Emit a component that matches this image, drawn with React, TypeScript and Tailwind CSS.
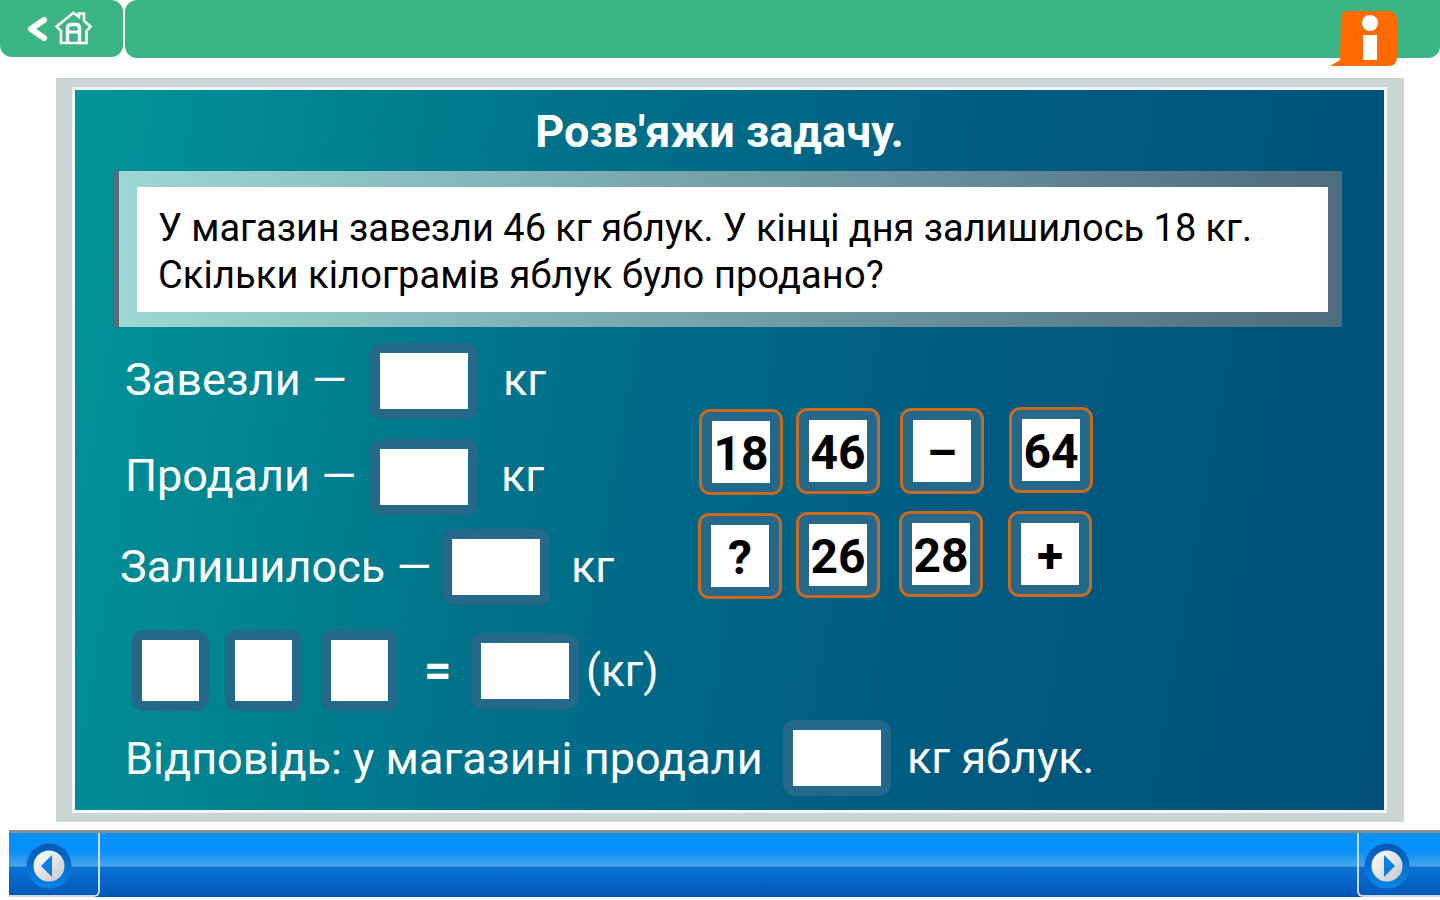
const FONT = "font-['Roboto','Noto_Sans',sans-serif]";

function HomeIcon() {
  return (
    <svg className="mb-0.5" width="37" height="34" viewBox="0 0 37 34" fill="none" stroke="#fff" strokeWidth="2.6">
      <path d="M1.5 15.5 L18.5 1.8 L24 6 L24 2.5 L29 2.5 L29 10 L35.5 15.5 L31.5 20 L31.5 32 L6 32 L6 20 Z" />
      <path d="M12.5 31 L12.5 17 Q12.5 13.5 16 13.5 L21 13.5 Q24.5 13.5 24.5 17 L24.5 31" strokeWidth="3.4" />
      <path d="M13 21 L24 21" strokeWidth="3" />
    </svg>
  );
}

function RoundArrow({ dir }: { dir: "left" | "right" }) {
  return (
    <svg className="mt-1" width="46" height="46" viewBox="0 0 46 46">
      <defs>
        <linearGradient id={`ring-${dir}`} x1="0" y1="0" x2="0" y2="1">
          <stop offset="0" stopColor="#0057b5" />
          <stop offset="1" stopColor="#0a86e8" />
        </linearGradient>
        <linearGradient id={`disc-${dir}`} x1="0" y1="0" x2="1" y2="1">
          <stop offset="0" stopColor="#ffffff" />
          <stop offset="1" stopColor="#c4c8cc" />
        </linearGradient>
      </defs>
      <circle cx="23" cy="23" r="22.5" fill={`url(#ring-${dir})`} />
      <circle cx="23" cy="23" r="15.5" fill={`url(#disc-${dir})`} />
      {dir === "left" ? (
        <path d="M15 23 L26 12 L26 34 Z" fill="#0d7fe0" />
      ) : (
        <path d="M31 23 L20 12 L20 34 Z" fill="#0d7fe0" />
      )}
    </svg>
  );
}

function Slot({ wide = false, tall = false, className = "" }: { wide?: boolean; tall?: boolean; className?: string }) {
  return (
    <div className={`rounded-xl bg-[#24688a] p-2.5 ${className}`}>
      <div className={`${wide ? "w-[88px]" : "w-[57px]"} ${tall ? "h-[61px]" : "h-[56px]"} bg-white`} />
    </div>
  );
}

function Tile({ label, className = "" }: { label: string; className?: string }) {
  return (
    <div className={`flex h-[86px] w-[84px] items-center justify-center rounded-[11px] border-[3px] border-[#c96a1e] bg-[#24688a] ${className}`}>
      <div className="flex h-[62px] w-[58px] items-center justify-center bg-white pt-[3px] text-[48px] leading-none font-bold text-black">
        {label}
      </div>
    </div>
  );
}

export default function App() {
  return (
    <div className={`${FONT} h-[900px] w-[1440px] overflow-hidden bg-white`}>
      <header className="relative flex h-[58px] gap-0.5">
        <div className="flex h-[57px] w-[123px] items-center gap-[7px] rounded-b-xl rounded-tr-xl bg-[#3bb583] pl-[26px]">
          <svg width="22" height="26" viewBox="0 0 22 26">
            <path d="M18 4 L5 13 L18 22" fill="none" stroke="#fff" strokeWidth="6" strokeLinejoin="round" strokeLinecap="round" />
          </svg>
          <HomeIcon />
        </div>
        <div className="h-[58px] flex-1 rounded-b-xl rounded-tl-xl bg-[#3bb583]" />
        <svg className="absolute top-[10px] left-[1329px]" width="69" height="57" viewBox="0 0 69 57">
          <path d="M12 8 Q12 1 19 1 L58 1 Q68 1 68 10 L68 47 Q68 56 59 56 L1 56 L11 50 Z" fill="#ff6a00" />
          <circle cx="41" cy="13" r="8" fill="#fff" />
          <rect x="34" y="25" width="14" height="25" fill="#fff" />
        </svg>
      </header>

      <main className="mt-[20px] ml-[56px] h-[744px] w-[1348px] bg-[#ccd5d6] pt-[9px] pl-[16px]">
        <div className="h-[726px] w-[1315px] border-[3px] border-[#f2f6f6] bg-[linear-gradient(100deg,#009598_0%,#00728b_35%,#005c81_65%,#00507a_100%)] text-white">
          <h1 className="mt-[17px] pr-[20px] text-center text-[45px] leading-[50px] font-bold tracking-[0.1px]">Розв'яжи задачу.</h1>

          <div className="mt-[14px] ml-[39px] w-[1228px] border-l-[5px] border-[#566e7c] bg-gradient-to-r from-[#9bd8d4] to-[#4d6c7c] pt-4 pr-[14px] pb-[15px] pl-[18px]">
            <p className="h-[125px] bg-white pt-[18px] pl-[21px] text-[38px] leading-[47px] text-black">
              <span className="tracking-[-0.03px]">У магазин завезли 46 кг яблук. У кінці дня залишилось 18 кг.</span>
              <br />
              <span className="tracking-[0.13px]">Скільки кілограмів яблук було продано?</span>
            </p>
          </div>

          <div className="flex">
            <div className="w-[624px] text-[45px] leading-none">
              <div className="mt-4 ml-[50px] flex items-center">
                <span className="w-[245px] pb-1">Завезли —</span>
                <Slot wide />
                <span className="ml-[25px] pb-1">кг</span>
              </div>
              <div className="mt-5 ml-[50px] flex items-center">
                <span className="w-[245px] pb-1">Продали —</span>
                <Slot wide />
                <span className="ml-[23px] pb-1">кг</span>
              </div>
              <div className="mt-3.5 ml-[45px] flex items-center">
                <span className="w-[322px] pb-0.5">Залишилось —</span>
                <Slot wide />
                <span className="ml-[21px] pb-0.5">кг</span>
              </div>
            </div>

            <div className="mt-[80px] flex flex-col gap-4">
              <div className="flex items-start">
                <Tile label="18" className="mt-0.5" />
                <Tile label="46" className="mt-px ml-[13px]" />
                <Tile label="–" className="mt-px ml-[20px]" />
                <Tile label="64" className="ml-[25px]" />
              </div>
              <div className="-ml-px flex items-start">
                <Tile label="?" className="mt-0.5" />
                <Tile label="26" className="mt-px ml-[14px]" />
                <Tile label="28" className="ml-[19px]" />
                <Tile label="+" className="ml-[25px]" />
              </div>
            </div>
          </div>

          <div className="mt-[25px] ml-[57px] flex items-center text-[45px] leading-none">
            <Slot tall />
            <Slot tall className="ml-4" />
            <Slot tall className="ml-[19px]" />
            <span className="ml-[26px] w-[47px] text-[48px] font-bold">=</span>
            <Slot wide />
            <span className="ml-[7px] text-[44px]">(кг)</span>
          </div>

          <div className="mt-[9px] ml-[50px] flex items-center text-[45px] leading-none">
            <span className="w-[658px]">Відповідь: у магазині продали</span>
            <Slot wide />
            <span className="ml-4 pb-0.5">кг яблук.</span>
          </div>
        </div>
      </main>

      <footer className="mt-2 ml-[9px] flex h-[67px] border-t-[3px] border-[#8a8f92] bg-[linear-gradient(#0090ff_0%,#0a92fa_30%,#4aa3e6_52%,#0b72d6_53%,#0058b8_100%)]">
        <div className="flex w-[91px] items-center justify-start rounded-br-md border-r-2 border-b-2 border-[#cfd8e0] pl-[17px]">
          <RoundArrow dir="left" />
        </div>
        <div className="flex-1" />
        <div className="flex w-[83px] items-center justify-start rounded-bl-md border-b-2 border-l-2 border-[#cfd8e0] pl-[5px]">
          <RoundArrow dir="right" />
        </div>
      </footer>
    </div>
  );
}
